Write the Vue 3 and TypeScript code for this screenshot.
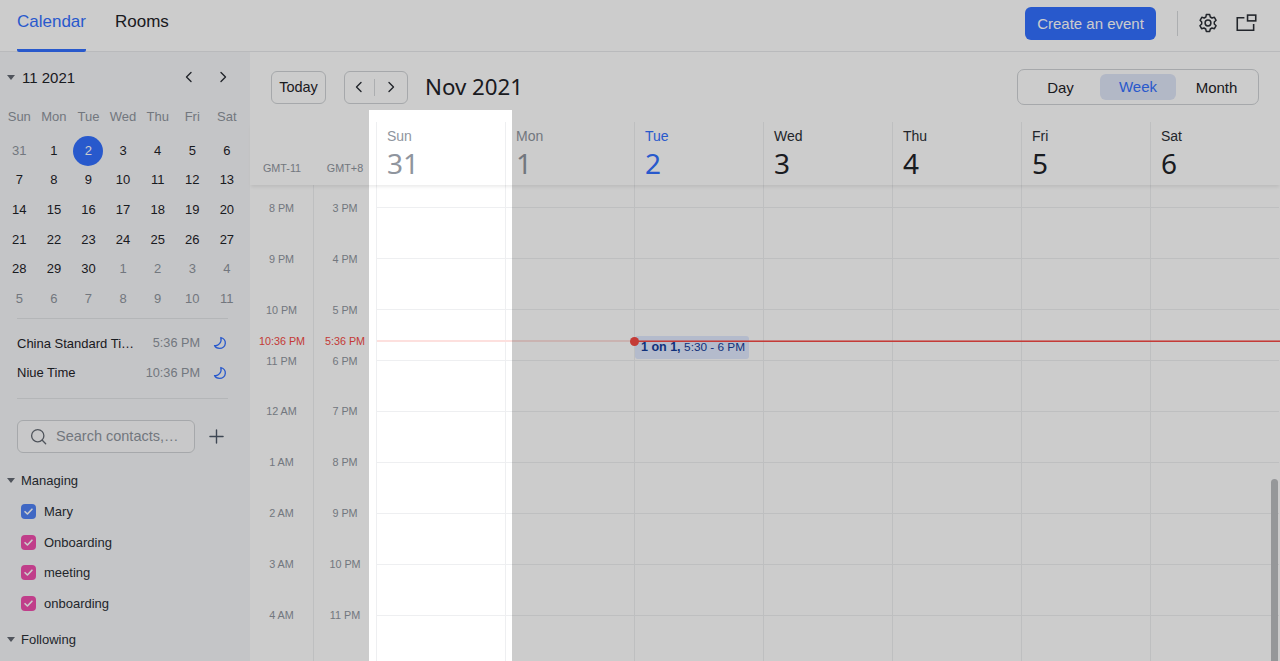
<script setup lang="ts">
const weekdays = ['Sun', 'Mon', 'Tue', 'Wed', 'Thu', 'Fri', 'Sat']
const miniDays: { n: number; muted?: boolean; active?: boolean }[] = [
  { n: 31, muted: true }, { n: 1 }, { n: 2, active: true }, { n: 3 }, { n: 4 }, { n: 5 }, { n: 6 },
  ...[7, 8, 9, 10, 11, 12, 13, 14, 15, 16, 17, 18, 19, 20, 21, 22, 23, 24, 25, 26, 27, 28, 29, 30].map((n) => ({ n })),
  ...[1, 2, 3, 4, 5, 6, 7, 8, 9, 10, 11].map((n) => ({ n, muted: true })),
]
const zones = [
  { name: 'China Standard Ti…', time: '5:36 PM' },
  { name: 'Niue Time', time: '10:36 PM' },
]
const managing = [
  { name: 'Mary', color: 'blue' },
  { name: 'Onboarding', color: 'pink' },
  { name: 'meeting', color: 'pink' },
  { name: 'onboarding', color: 'pink' },
]
const weekCols = [
  { day: 'Sun', n: 31, kind: 'past' },
  { day: 'Mon', n: 1, kind: 'past' },
  { day: 'Tue', n: 2, kind: 'cur' },
  { day: 'Wed', n: 3, kind: '' },
  { day: 'Thu', n: 4, kind: '' },
  { day: 'Fri', n: 5, kind: '' },
  { day: 'Sat', n: 6, kind: '' },
]
const hoursA = ['8 PM', '9 PM', '10 PM', '11 PM', '12 AM', '1 AM', '2 AM', '3 AM', '4 AM']
const hoursB = ['3 PM', '4 PM', '5 PM', '6 PM', '7 PM', '8 PM', '9 PM', '10 PM', '11 PM']
</script>

<template>
  <div class="app">
    <header class="topbar">
      <nav class="tabs">
        <a class="tab on">Calendar</a>
        <a class="tab">Rooms</a>
      </nav>
      <div class="top-actions">
        <button class="create">Create an event</button>
        <span class="vsep"></span>
        <svg class="ticon" viewBox="0 0 20 20" fill="none" stroke="#2b2f36" stroke-width="1.5" stroke-linejoin="round">
          <path d="M8.300 1.600h3.400l.6 2.400 1.700 1 2.400-.7 1.700 3-1.800 1.700v2l1.800 1.700-1.700 3-2.400-.7-1.700 1-.6 2.400H8.300l-.6-2.400-1.700-1-2.400.7-1.700-3 1.800-1.700V9L2.100 7.300l1.700-3 2.400.7 1.700-1z" />
          <circle cx="10" cy="10" r="2.900" />
        </svg>
        <svg class="ticon win" viewBox="0 0 20 20" fill="none" stroke="#2b2f36" stroke-width="1.500">
          <path d="M8 4.500H1.200v12h15.600v-6" />
          <rect x="11" y="2" width="7.800" height="5.500" />
        </svg>
      </div>
    </header>

    <div class="content">
      <aside class="sidebar">
        <div class="cal-head">
          <span class="caret"></span>
          <span class="cal-title">11 2021</span>
          <svg class="chev first" viewBox="0 0 12 12"><path d="M8 1.500 3.500 6 8 10.500" /></svg>
          <svg class="chev" viewBox="0 0 12 12"><path d="M4 1.500 8.500 6 4 10.500" /></svg>
        </div>
        <div class="mini-week">
          <span v-for="d in weekdays" :key="d">{{ d }}</span>
        </div>
        <div class="mini-days">
          <span v-for="(d, i) in miniDays" :key="i" class="mini-day" :class="{ muted: d.muted, active: d.active }">
            <i>{{ d.n }}</i>
          </span>
        </div>

        <div class="rule first-rule"></div>
        <div v-for="z in zones" :key="z.name" class="zone">
          <span class="zone-name">{{ z.name }}</span>
          <span class="zone-time">{{ z.time }}</span>
          <svg class="moon" viewBox="0 0 14 14" fill="none" stroke="#3370ff" stroke-width="1.300" stroke-linejoin="round">
            <path d="M7.800 1.500c2.900.9 4.700 3.300 4.500 5.900-.2 2.900-2.700 5-5.800 5-2.200 0-4.200-1-5-2.800 3.700.8 7.700-3.200 6.300-8.100z" />
          </svg>
        </div>
        <div class="rule second-rule"></div>

        <div class="search-row">
          <div class="search">
            <svg class="search-icon" viewBox="0 0 18 18" fill="none" stroke="#646a73" stroke-width="1.400" stroke-linecap="round">
              <circle cx="8.200" cy="8.200" r="6.500" />
              <path d="m13 13 3.600 3.600" />
            </svg>
            <span class="search-text">Search contacts,…</span>
          </div>
          <svg class="plus" viewBox="0 0 16 16" stroke="#4e5969" stroke-width="1.500" stroke-linecap="round">
            <path d="M8 1v14M1 8h14" />
          </svg>
        </div>

        <div class="group managing"><span class="caret"></span>Managing</div>
        <div v-for="m in managing" :key="m.name" class="cal-item">
          <span class="check" :class="m.color">
            <svg viewBox="0 0 12 12" fill="none" stroke="#fff" stroke-width="1.500" stroke-linecap="round" stroke-linejoin="round">
              <path d="m2.800 6.200 2.200 2.100 4.200-4.400" />
            </svg>
          </span>
          {{ m.name }}
        </div>
        <div class="group following"><span class="caret"></span>Following</div>
      </aside>

      <main class="main">
        <div class="toolbar">
          <button class="today-btn">Today</button>
          <div class="pager">
            <svg class="chev" viewBox="0 0 12 12"><path d="M8 1.500 3.500 6 8 10.500" /></svg>
            <span class="pager-sep"></span>
            <svg class="chev" viewBox="0 0 12 12"><path d="M4 1.500 8.500 6 4 10.500" /></svg>
          </div>
          <h1 class="title">Nov 2021</h1>
          <div class="segments">
            <span class="seg">Day</span>
            <span class="seg on">Week</span>
            <span class="seg">Month</span>
          </div>
        </div>

        <div class="week-head">
          <div class="gmt first">GMT-11</div>
          <div class="gmt">GMT+8</div>
          <div v-for="c in weekCols" :key="c.day" class="head-col" :class="c.kind">
            <span class="hd-day">{{ c.day }}</span>
            <span class="hd-num">{{ c.n }}</span>
          </div>
        </div>

        <div class="body">
          <div class="gutter first">
            <span v-for="h in hoursA" :key="h">{{ h }}</span>
          </div>
          <div class="gutter">
            <span v-for="h in hoursB" :key="h">{{ h }}</span>
          </div>
          <div v-for="c in weekCols" :key="c.day + '-col'" class="col">
            <div class="slot lead"></div>
            <div v-for="h in hoursA" :key="h" class="slot"></div>
            <div v-if="c.kind === 'cur'" class="event"><b>1 on 1,</b> <span>5:30 - 6 PM</span></div>
          </div>
          <span class="now-label a">10:36 PM</span>
          <span class="now-label b">5:36 PM</span>
          <div class="now-past"></div>
          <div class="now-line"></div>
          <div class="now-dot"></div>
          <div class="scroll-thumb"></div>
        </div>
      </main>
    </div>
    <div class="spotlight"></div>
  </div>
</template>

<style>
html, body { margin: 0; overflow: hidden; }
</style>

<style scoped>
.app {
  position: relative;
  width: 1280px;
  height: 661px;
  overflow: hidden;
  background: #fff;
  color: #1f2329;
  font-family: "Liberation Sans", Arial, sans-serif;
  display: flex;
  flex-direction: column;
}
.spotlight {
  position: absolute;
  z-index: 5;
  left: 369px;
  top: 110px;
  width: 143px;
  height: 560px;
  box-shadow: 0 0 0 1500px rgba(0, 0, 0, 0.2);
  pointer-events: none;
}
.topbar {
  height: 52px;
  flex: none;
  box-sizing: border-box;
  border-bottom: 1px solid #e8e9eb;
  display: flex;
  align-items: stretch;
  justify-content: space-between;
  padding: 0 22px 0 17px;
}
.tabs { display: flex; gap: 29px; }
.tab {
  font-size: 17px;
  line-height: 44px;
  height: 52px;
  box-sizing: border-box;
  color: #1f2329;
}
.tab.on { color: #3370ff; border-bottom: 3px solid #3370ff; border-radius: 0 0 2px 2px; }
.top-actions { display: flex; align-items: center; height: 46px; }
.create {
  width: 131px;
  height: 33px;
  border: 0;
  border-radius: 6px;
  background: #3370ff;
  color: #fff;
  font: 15px "Liberation Sans", Arial, sans-serif;
  padding: 0;
}
.vsep { width: 1px; height: 25px; background: #d8dadd; margin: 0 20px 0 21px; }
.ticon { width: 20px; height: 20px; display: block; }
.ticon.win { margin: 0 1px 0 18px; width: 21px; height: 21px; }

.content { flex: 1; min-height: 0; display: flex; }
.sidebar {
  width: 250px;
  flex: none;
  box-sizing: border-box;
  background: #f6f7f9;
  overflow: hidden;
  font-size: 13px;
}
.caret {
  display: inline-block;
  width: 0;
  height: 0;
  flex: none;
  border-left: 4px solid transparent;
  border-right: 4px solid transparent;
  border-top: 5px solid #646a73;
}
.cal-head {
  height: 50px;
  display: flex;
  align-items: center;
  padding-left: 7px;
}
.cal-title { font-size: 15px; margin-left: 7px; }
.chev { width: 12px; height: 12px; fill: none; stroke: #2b2f36; stroke-width: 1.400; stroke-linecap: round; stroke-linejoin: round; flex: none; }
.chev.first { margin-left: auto; margin-right: 22px; }
.cal-head .chev:last-child { margin-right: 21px; }
.mini-week {
  display: grid;
  grid-template-columns: repeat(7, 34.600px);
  height: 28px;
  margin: 0 0 6px 2px;
  align-items: center;
  text-align: center;
  color: #8f959e;
  font-size: 13px;
}
.mini-days {
  display: grid;
  grid-template-columns: repeat(7, 34.600px);
  grid-auto-rows: 29.600px;
  margin-left: 2px;
  font-size: 13px;
}
.mini-day { display: flex; align-items: center; justify-content: center; }
.mini-day i {
  font-style: normal;
  width: 30px;
  height: 30px;
  line-height: 30px;
  text-align: center;
  border-radius: 50%;
  flex: none;
}
.mini-day.muted { color: #8f959e; }
.mini-day.active i { background: #3370ff; color: #fff; }
.rule { height: 1px; background: #e2e4e7; margin-left: 17px; width: 211px; }
.first-rule { margin-top: 4px; margin-bottom: 10px; }
.second-rule { margin-top: 10px; }
.zone {
  height: 29.600px;
  display: flex;
  align-items: center;
  padding: 0 23px 0 17px;
}
.zone-name { white-space: nowrap; }
.zone-time { margin-left: auto; color: #8f959e; font-size: 12.700px; }
.moon { width: 14px; height: 14px; margin-left: 13px; flex: none; }
.search-row { display: flex; align-items: center; margin: 21px 0 14px 17px; }
.search {
  width: 178px;
  height: 33px;
  box-sizing: border-box;
  border: 1px solid #d0d3d6;
  border-radius: 6px;
  background: #fbfbfc;
  display: flex;
  align-items: center;
  padding-left: 12px;
}
.search-icon { width: 17px; height: 17px; flex: none; }
.search-text { margin-left: 9px; color: #8f959e; font-size: 14.500px; white-space: nowrap; }
.plus { width: 15px; height: 15px; margin-left: 14px; }
.group {
  height: 28px;
  display: flex;
  align-items: center;
  gap: 6px;
  padding-left: 7px;
  color: #2b2f36;
}
.cal-item {
  height: 30.900px;
  display: flex;
  align-items: center;
  padding-left: 21px;
  color: #2b2f36;
}
.managing { margin-bottom: 1px; }
.check {
  width: 15px;
  height: 15px;
  border-radius: 4px;
  margin-right: 8px;
  display: flex;
  align-items: center;
  justify-content: center;
}
.check svg { width: 13px; height: 13px; }
.check.blue { background: #5083f5; }
.check.pink { background: #f14ead; }
.following { margin-top: 6px; }

.main { flex: 1; min-width: 0; position: relative; display: flex; flex-direction: column; }
.toolbar {
  height: 70px;
  flex: none;
  display: flex;
  align-items: center;
  padding: 0 21px;
}
button { cursor: default; }
.today-btn {
  width: 55px;
  height: 33px;
  box-sizing: border-box;
  border: 1px solid #d0d3d6;
  border-radius: 6px;
  background: #fff;
  color: #1f2329;
  padding: 0;
  font: 14.500px "Liberation Sans", Arial, sans-serif;
}
.pager {
  width: 64px;
  height: 33px;
  box-sizing: border-box;
  border: 1px solid #d0d3d6;
  border-radius: 6px;
  margin-left: 18px;
  display: flex;
  align-items: center;
  justify-content: space-around;
  padding: 0 5px 0 3px;
}
.pager-sep { width: 1px; height: 17px; background: #d8dadd; }
.title {
  margin: 0 0 2px 17px;
  font: 400 22.300px "Noto Sans", "Open Sans", sans-serif;
  color: #1f2329;
}
.segments {
  margin-left: auto;
  width: 242px;
  height: 36px;
  box-sizing: border-box;
  border: 1px solid #d0d3d6;
  border-radius: 7px;
  display: flex;
  align-items: center;
  padding: 0 1px 0 3px;
  font-size: 15px;
}
.seg { text-align: center; }
.seg:first-child { width: 79px; }
.seg:last-child { width: 81px; }
.seg.on {
  width: 76px;
  height: 26px;
  line-height: 26px;
  border-radius: 6px;
  background: #dfe6f8;
  color: #3370ff;
}

.week-head {
  height: 63px;
  flex: none;
  display: flex;
  position: relative;
  z-index: 2;
  background: #fff;
  box-shadow: 0 3px 3px -1px rgba(0, 0, 0, 0.08);
}
.gmt {
  width: 62px;
  flex: none;
  box-sizing: border-box;
  padding-top: 40px;
  text-align: center;
  font-size: 10.800px;
  color: #8f959e;
}
.gmt.first { width: 64px; }
.head-col {
  width: 129px;
  flex: none;
  box-sizing: border-box;
  border-left: 1px solid #eeeff1;
  padding-left: 10px;
  display: flex;
  flex-direction: column;
}
.hd-day { font-size: 14px; line-height: 16px; margin-top: 6px; color: #2b2f36; }
.hd-num { font: 400 28px/38px "Noto Sans", "Open Sans", sans-serif; color: #1f2329; }
.head-col.past span { color: #8f959e; }
.head-col.cur span { color: #3370ff; }

.body { flex: 1; min-height: 0; position: relative; display: flex; overflow: hidden; }
.gutter {
  width: 62px;
  flex: none;
  box-sizing: border-box;
  margin-top: -2px;
  display: flex;
  flex-direction: column;
  font-size: 10.800px;
  color: #8f959e;
  text-align: center;
}
.gutter span { height: 50.850px; line-height: 51px; flex: none; }
.gutter.first { border-right: 1px solid #eeeff1; width: 64px; height: 480px; }
.col {
  width: 129px;
  flex: none;
  box-sizing: border-box;
  border-left: 1px solid #eeeff1;
  position: relative;
}
.slot { height: 51px; box-sizing: border-box; border-bottom: 1px solid #eeeff1; }
.slot.lead { height: 23px; }
.event {
  position: absolute;
  left: 0;
  top: 151px;
  width: 114px;
  height: 23px;
  box-sizing: border-box;
  border-radius: 3px;
  background: #e1eaff;
  color: #133c9a;
  font-size: 12.500px;
  line-height: 23px;
  padding-left: 6px;
  white-space: nowrap;
}
.event span { font-size: 11.800px; }
.now-label {
  position: absolute;
  top: 148px;
  font-size: 10.800px;
  line-height: 16px;
  color: #f54a45;
  text-align: center;
  width: 62px;
}
.now-label.a { left: 0; width: 64px; }
.now-label.b { left: 64px; }
.now-past { position: absolute; left: 127px; width: 257px; top: 155px; height: 2px; background: #fde0de; }
.now-line { position: absolute; left: 384px; right: 0; top: 156px; height: 1px; background: #f54a45; box-shadow: 0 -1px 0 rgba(245, 74, 69, 0.55); }
.now-dot {
  position: absolute;
  left: 380px;
  top: 152px;
  width: 9px;
  height: 9px;
  border-radius: 50%;
  background: #f54a45;
}
.scroll-thumb {
  position: absolute;
  right: 2px;
  top: 294px;
  bottom: -10px;
  width: 7px;
  border-radius: 4px;
  background: #bbbdc0;
}
</style>
